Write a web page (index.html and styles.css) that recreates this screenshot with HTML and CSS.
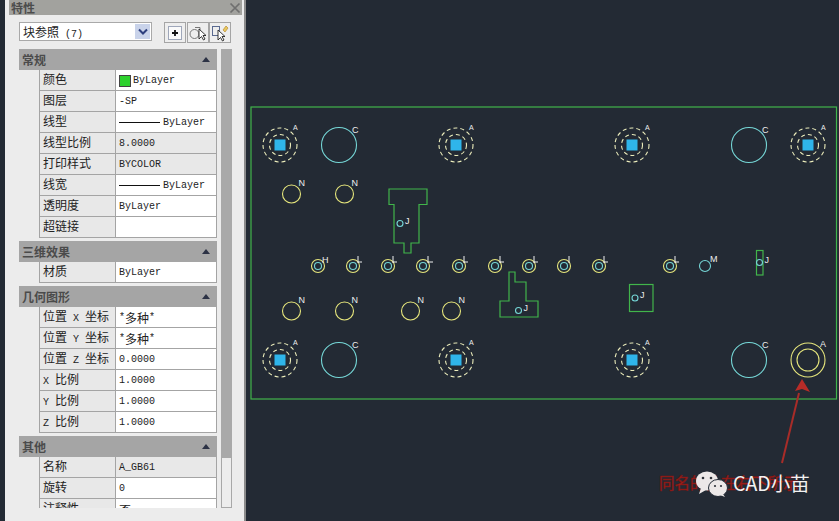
FILE: index.html
```html
<!DOCTYPE html>
<html lang="zh">
<head>
<meta charset="utf-8">
<title>特性</title>
<link rel="stylesheet" href="styles.css">
</head>
<body>
<div class="app">
  <aside class="panel">
    <div class="titlebar"><span>特性</span><svg class="close" width="12" height="12" viewBox="0 0 12 12"><path d="M1.500 1.500l9 9M10.500 1.500l-9 9" stroke="#6f6f6f" stroke-width="1.700" fill="none"/></svg></div>
    <div class="toolbar">
      <div class="combo"><span class="combo-text">块参照<i class="la"> (7)</i></span><span class="combo-btn"><svg width="10" height="8" viewBox="0 0 10 8"><path d="M1 1.500l4 4 4-4" stroke="#2d3f7e" stroke-width="2" fill="none"/></svg></span></div>
      <div class="tools">
        <span class="tool"><svg width="18" height="18" viewBox="0 0 18 18"><rect x="2.500" y="2.500" width="13" height="13" fill="#fafafa" stroke="#4a5a80" stroke-dasharray="1 1"/><path d="M9 6v6M6 9h6" stroke="#111" stroke-width="1.800"/></svg></span>
        <span class="tool"><svg width="20" height="18" viewBox="0 0 20 18"><circle cx="6.500" cy="10" r="4.500" fill="none" stroke="#777"/><path d="M7 3.500h5v5" fill="none" stroke="#777"/><path d="M11 5l0 10 2.500-2.500 2 3.500 1.500-1-2-3.500 3 0z" fill="#fff" stroke="#222" stroke-width=".9"/></svg></span>
        <span class="tool"><svg width="20" height="18" viewBox="0 0 20 18"><rect x="2.500" y="2.500" width="7" height="9" fill="none" stroke="#5a6a90"/><path d="M13 6l3-4 2 2-3 4z" fill="#e8c860" stroke="#b98d30" stroke-width=".7"/><path d="M8 6l0 10 2.500-2.500 2 3.500 1.500-1-2-3.500 3 0z" fill="#fff" stroke="#222" stroke-width=".9"/></svg></span>
      </div>
    </div>
    <div class="body">
      <div class="sections">
        <section class="section">
          <header class="head"><span>常规</span><i class="tri"></i></header>
          <div class="row"><span class="k">颜色</span><span class="v"><i class="swatch"></i>ByLayer</span></div>
          <div class="row"><span class="k">图层</span><span class="v">-SP</span></div>
          <div class="row"><span class="k">线型</span><span class="v"><i class="line"></i>ByLayer</span></div>
          <div class="row"><span class="k">线型比例</span><span class="v ro">8.0000</span></div>
          <div class="row"><span class="k">打印样式</span><span class="v ro">BYCOLOR</span></div>
          <div class="row"><span class="k">线宽</span><span class="v"><i class="line"></i>ByLayer</span></div>
          <div class="row"><span class="k">透明度</span><span class="v">ByLayer</span></div>
          <div class="row"><span class="k">超链接</span><span class="v"></span></div>
        </section>
        <section class="section">
          <header class="head"><span>三维效果</span><i class="tri"></i></header>
          <div class="row"><span class="k">材质</span><span class="v">ByLayer</span></div>
        </section>
        <section class="section">
          <header class="head"><span>几何图形</span><i class="tri"></i></header>
          <div class="row"><span class="k">位置<i class="la"> X </i>坐标</span><span class="v">*<i class="cjk">多种</i>*</span></div>
          <div class="row"><span class="k">位置<i class="la"> Y </i>坐标</span><span class="v">*<i class="cjk">多种</i>*</span></div>
          <div class="row"><span class="k">位置<i class="la"> Z </i>坐标</span><span class="v">0.0000</span></div>
          <div class="row"><span class="k"><i class="la">X </i>比例</span><span class="v">1.0000</span></div>
          <div class="row"><span class="k"><i class="la">Y </i>比例</span><span class="v">1.0000</span></div>
          <div class="row"><span class="k"><i class="la">Z </i>比例</span><span class="v">1.0000</span></div>
        </section>
        <section class="section">
          <header class="head"><span>其他</span><i class="tri"></i></header>
          <div class="row"><span class="k">名称</span><span class="v ro">A_GB61</span></div>
          <div class="row"><span class="k">旋转</span><span class="v">0</span></div>
          <div class="row"><span class="k">注释性</span><span class="v"><i class="cjk">否</i></span></div>
        </section>
      </div>
      <div class="scroll"><div class="thumb"></div></div>
    </div>
  </aside>
  <main class="canvas">
    <svg class="drawing" width="593" height="521" viewBox="246 0 593 521">
      <defs>
        <g id="a"><circle r="17" class="dash"/><circle r="10.500" class="dash"/><rect x="-5.500" y="-5.500" width="11" height="11" fill="#2fb5ea"/><text x="13" y="-15" class="lbl sm">A</text></g>
        <g id="c"><circle r="17.500" class="cy"/><text x="13" y="-12" class="lbl">C</text></g>
        <g id="n"><circle r="9" class="ye"/><text x="7" y="-8" class="lbl">N</text></g>
        <g id="s"><circle r="6.500" class="ye"/><circle r="3.500" class="cy"/></g>
        <g id="j"><circle r="3" class="cy"/><text x="5" y="0" class="lbl">J</text></g>
      </defs>
      <rect x="251" y="107" width="585.500" height="292" class="gr"/>
      <use href="#a" x="280" y="145"/><use href="#c" x="339" y="145"/><use href="#a" x="456" y="145"/><use href="#a" x="632" y="145"/><use href="#c" x="749" y="145"/><use href="#a" x="808" y="145"/>
      <use href="#n" x="291.500" y="194"/><use href="#n" x="344.500" y="194"/>
      <path class="gr" d="M389 189H427V204.500H419V243H411V253H404V243H394V204.500H389Z"/>
      <use href="#j" x="400" y="223.500"/>
      <use href="#s" x="318" y="266"/><text x="322" y="263" class="lbl">H</text>
      <g>
        <use href="#s" x="353" y="266"/><path d="M358 256v7M358 262h4" class="wh"/>
        <use href="#s" x="388" y="266"/><path d="M393 256v7M393 262h4" class="wh"/>
        <use href="#s" x="423" y="266"/><path d="M428 256v7M428 262h5" class="wh"/>
        <use href="#s" x="459" y="266"/><path d="M464 256v7M464 262h4" class="wh"/>
        <use href="#s" x="495" y="266"/><path d="M500 256v7M500 262h4" class="wh"/>
        <use href="#s" x="529" y="266"/><path d="M534 256v7M534 262h4" class="wh"/>
        <use href="#s" x="564" y="266"/><path d="M569 256v7" class="wh"/>
        <use href="#s" x="599" y="266"/><path d="M604 256v7M604 262h4" class="wh"/>
        <use href="#s" x="670" y="266"/><path d="M675 256v7M675 262h4" class="wh"/>
      </g>
      <circle cx="705" cy="266" r="5.500" class="cy"/><text x="710" y="262" class="lbl">M</text>
      <rect x="756.500" y="250.500" width="6.500" height="24.500" class="gr"/>
      <use href="#j" x="759.500" y="262.500"/>
      <use href="#n" x="291.500" y="311"/><use href="#n" x="344.500" y="311"/><use href="#n" x="410.500" y="311"/><use href="#n" x="451.500" y="311"/>
      <path class="gr" d="M500 301H509V272H515V282H526V301H538V317H500Z"/>
      <use href="#j" x="518.500" y="310.500"/>
      <rect x="629.500" y="284.500" width="23.500" height="27" class="gr"/>
      <use href="#j" x="635" y="298"/>
      <use href="#a" x="280" y="360"/><use href="#c" x="339" y="360"/><use href="#a" x="456" y="360"/><use href="#a" x="632" y="360"/><use href="#c" x="749" y="360"/>
      <circle cx="808" cy="360" r="17" class="ye"/><circle cx="808" cy="360" r="11" class="ye"/><text x="820" y="347" class="lbl">A</text>
      <path d="M782 463L799 393" stroke="#a82c28" stroke-width="2" fill="none"/>
      <path d="M802 379L810 392L802 389L795 391Z" fill="#b82c28"/>
      <text x="659" y="489" class="red">同名的孔在右下所示</text>
      <g fill="#ece8e8"><ellipse cx="707" cy="481" rx="11" ry="9.500"/><path d="M701 488l-2 6 7-4z"/><ellipse cx="718" cy="488" rx="9.500" ry="8.500" stroke="#232a35"/><path d="M723 494l2 3-5-2z"/></g>
      <g fill="#30323a"><circle cx="703" cy="478" r="1.300"/><circle cx="711" cy="478" r="1.300"/><circle cx="715" cy="486" r="1.100"/><circle cx="721" cy="486" r="1.100"/></g>
      <text x="733" y="491" class="mark">CAD小苗</text>
    </svg>
  </main>
</div>
</body>
</html>
```
FILE: styles.css
```css
* { box-sizing: border-box; }
html, body { margin: 0; height: 100%; overflow: hidden; background: #232a34; }
.app { display: flex; width: 839px; height: 521px; padding-left: 5px; }
.panel {
  width: 241px; flex: none; background: #ececec; padding: 0 2px 0 4px;
  font-family: "Noto Sans CJK SC", sans-serif; color: #222;
  display: flex; flex-direction: column; overflow: hidden;
  border-right: 2px solid #8b8b8b;
}
.la { font: normal 10px "Liberation Mono", monospace; white-space: pre; }
.cjk { font: normal 12px "Noto Sans CJK SC", sans-serif; }
.titlebar {
  height: 15px; background: #a2a29e; display: flex; justify-content: space-between; align-items: center;
  padding: 0 1px 0 2px; font-size: 12px; font-weight: 700; color: #4c4c4c; flex: none;
}
.toolbar { display: flex; padding: 7px 0 0 10px; height: 34px; flex: none; }
.combo { width: 133px; height: 19px; background: #fff; border: 1px solid #a9a9a9; display: flex; justify-content: space-between; align-items: center; padding: 0 1px 0 3px; font-size: 12px; line-height: 17px; }
.combo-btn { width: 15px; height: 15px; background: #c9d3ea; display: flex; align-items: center; justify-content: center; }
.tools { display: flex; gap: 0.500px; margin-left: 12px; }
.tool { width: 22px; height: 21px; border: 1px solid #a5a5a5; background: #eeeeee; display: flex; align-items: center; justify-content: center; }
.body { display: flex; height: 459px; padding-left: 10px; flex: none; }
.sections { width: 198px; overflow: hidden; display: flex; flex-direction: column; gap: 3px; flex: none; }
.section { flex: none; }
.head { height: 21px; background: #a5a5a5; display: flex; justify-content: space-between; align-items: center; padding: 0 7px 1px 3px; font-size: 12px; font-weight: 700; color: #4b4b4b; }
.tri { width: 0; height: 0; border: 4px solid transparent; border-top: 0; border-bottom: 5px solid #2c3245; }
.row { display: grid; grid-template-columns: 76px 1fr; height: 21px; margin-left: 20px; border-bottom: 1px solid #a4a4a4; border-left: 1px solid #a4a4a4; border-right: 1px solid #a4a4a4; }
.k { background: #e8e8e8; border-right: 1px solid #a4a4a4; padding-left: 3px; font-size: 12px; line-height: 18px; white-space: nowrap; overflow: hidden; }
.k .la { font-size: 10px; }
.v { background: #fff; padding: 1px 0 0 3px; font: 10px "Liberation Mono", monospace; display: flex; align-items: center; white-space: pre; }
.v.ro { background: #e8e8e8; }
.swatch { width: 12px; height: 12px; background: #2ed12e; border: 1px solid #444; margin-right: 2px; }
.line { width: 41px; height: 1px; background: #111; margin-right: 3px; }
.scroll { width: 11px; margin-left: 4px; border: 1px solid #a8a8a8; background: #ededed; flex: none; }
.thumb { height: 409px; margin: -1px; background: #a9a9a9; }
.canvas { flex: 1; min-width: 0; }
.drawing { display: block; }
.gr { fill: none; stroke: #41b54b; stroke-width: 1.200; }
.cy { fill: none; stroke: #75d6d6; stroke-width: 1.100; }
.ye { fill: none; stroke: #e6e67c; stroke-width: 1.100; }
.wh { fill: none; stroke: #f2f2f2; stroke-width: 1; }
.dash { fill: none; stroke: #ecedbc; stroke-width: 1.100; stroke-dasharray: 4 3; }
.lbl { fill: #eeeeee; font: 9px "Liberation Sans", sans-serif; }
.sm { font-size: 7px; }
.red { fill: #a5201c; stroke: #7a1512; stroke-width: 0.500; font: 15.500px "Noto Sans CJK SC", sans-serif; }
.mark { fill: #f2f2f2; font: 19.500px "Noto Sans CJK SC", sans-serif; }
```
